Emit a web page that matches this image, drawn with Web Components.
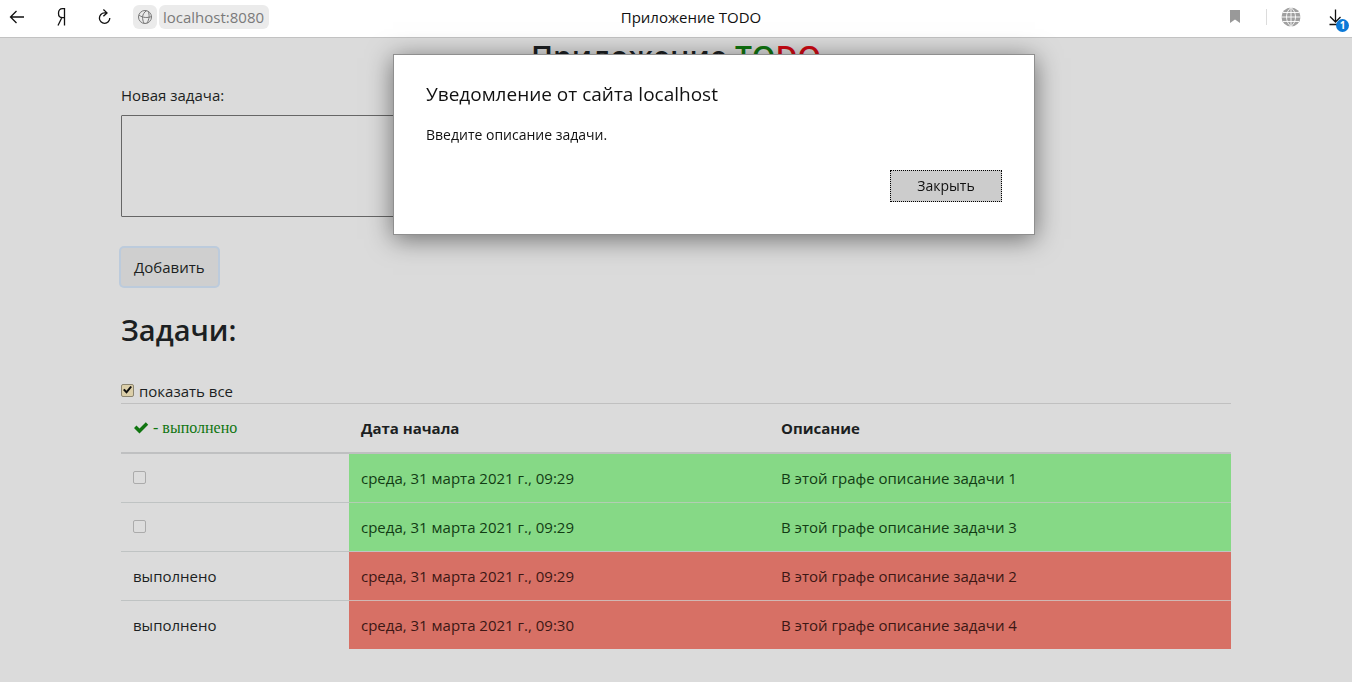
<!DOCTYPE html>
<html lang="ru">
<head>
<meta charset="utf-8">
<title>Приложение TODO</title>
<style>
  html, body { margin: 0; min-height: 100%; }
  body {
    background: #dbdbdb;
    color: #1c1f22;
    font: 15px/24px "Open Sans", "Noto Sans", sans-serif;
  }
</style>
</head>
<body>
<browser-bar address="localhost:8080">Приложение TODO</browser-bar>
<todo-app></todo-app>
<site-alert heading="Уведомление от сайта localhost">Введите описание задачи.</site-alert>

<script>
class BaseElement extends HTMLElement {
  render(html) {
    const template = document.createElement('template');
    template.innerHTML = html;
    this.attachShadow({ mode: 'open' }).append(template.content.cloneNode(true));
  }
}

class BrowserBar extends BaseElement {
  connectedCallback() {
    this.render(`
      <style>
        :host {
          display: grid; grid-template-columns: 1fr auto 1fr; align-items: center;
          box-sizing: border-box; height: 38px; padding-bottom: 3px; background: #fff; color: #111;
          border-bottom: 1px solid #c2c2c2; font-size: 15px; line-height: 24px;
        }
        nav, .tools { display: flex; align-items: center; }
        .tools { justify-content: flex-end; }
        button { border: 0; padding: 0; background: none; font: inherit; color: inherit; display: flex; }
        svg { display: block; fill: none; stroke: currentColor; }
        .back { margin-left: 8px; }
        .home { margin-left: 31px; }
        .reload { margin-left: 30px; }
        .site { margin-left: 20px; }
        .site, .url { background: #ebebeb; border-radius: 6px; height: 24px; }
        .site { width: 24px; align-items: center; justify-content: center; color: #777; }
        .url { margin-left: 2px; padding: 0 5px 0 4px; color: #7a7a7a; }
        h1 { margin: 0; padding-left: 30px; font: inherit; }
        .mark { color: #999; }
        .rule { width: 1px; height: 16px; background: #dcdcdc; margin: 0 14px 0 26px; }
        .web { color: #a0a0a0; }
        .load { position: relative; margin-left: 27px; width: 24px; height: 24px; color: #111; }
        .badge {
          position: absolute; right: 3px; bottom: -3px; width: 13px; height: 13px; border-radius: 50%;
          background: #0b79d8; color: #fff; font-size: 10px; line-height: 13px; font-weight: 700; text-align: center;
        }
      </style>
      <nav aria-label="Навигация">
        <button class="back" aria-label="Назад"><svg width="18" height="16" viewBox="0 0 18 16"><path d="M16 8H2.500M8.500 2L2.500 8l6 6" stroke-width="1.300"/></svg></button>
        <button class="home" aria-label="Яндекс"><svg width="10" height="20" viewBox="0 0 10 20"><path d="M7.500 18.500V1.700H5.500C3 1.700 1.500 3.500 1.500 6.200S3 10.700 5.500 10.700h2M4.800 10.700L1 18.500" stroke-width="1.300"/></svg></button>
        <button class="reload" aria-label="Обновить"><svg width="16" height="18" viewBox="0 0 16 18"><path d="M9.500 4.900H7.500a5.200 5.200 0 1 0 5.300 5.200M6.400 1.500L10 4.900 6.400 8.300" stroke-width="1.300"/></svg></button>
        <button class="site" aria-label="О сайте"><svg width="16" height="16" viewBox="0 0 16 16"><circle cx="8" cy="8" r="6.500"/><path d="M9.500 1.700C4.500 5 5 10 7 14.300M2 6c3.500 3 9 3 12.500 1.500M11 2.300c1.800 3.200 1.300 8-1 11.800"/></svg></button>
        <span class="url"></span>
      </nav>
      <h1><slot></slot></h1>
      <div class="tools">
        <button class="mark" aria-label="Закладка"><svg width="10" height="14" viewBox="0 0 10 14"><path d="M0 0h10v13L5 9.500 0 13z" fill="currentColor" stroke="none"/></svg></button>
        <span class="rule"></span>
        <button class="web" aria-label="Перевод"><svg width="20" height="20" viewBox="0 0 20 20"><circle cx="10" cy="10" r="9.500" fill="currentColor" stroke="none"/><path stroke="#fff" stroke-width=".9" d="M10 0v20M0 10h20M2 5.500h16M2 14.500h16M10 .500C4 5 4 15 10 19.500M10 .500C16 5 16 15 10 19.500"/></svg></button>
        <button class="load" aria-label="Загрузки"><svg width="20" height="24" viewBox="0 0 20 24"><path d="M7.500 4.500v12.500M2 11.500L7.500 17l5-5M1.500 19.500h8" stroke-width="1.300"/></svg><span class="badge">1</span></button>
      </div>`);
    this.shadowRoot.querySelector('.url').textContent = this.getAttribute('address');
  }
}
customElements.define('browser-bar', BrowserBar);

class CheckBox extends BaseElement {
  connectedCallback() {
    this.render(`
      <style>
        :host { display: block; }
        label { display: flex; align-items: center; gap: 5px; height: 24px; }
        input {
          appearance: none; box-sizing: border-box; width: 13px; height: 13px; margin: 0 0 2px;
          border: 1px solid #ababab; border-radius: 2px; background: #dddddd; display: grid; place-items: center;
        }
        input:checked { background: #dccfa9; border-color: #8c8570; }
        input:checked::before {
          content: ""; width: 9px; height: 9px; background: #111;
          clip-path: polygon(0 50%, 18% 35%, 38% 58%, 82% 5%, 100% 18%, 40% 92%);
        }
      </style>
      <label><input type="checkbox"><slot></slot></label>`);
    const input = this.shadowRoot.querySelector('input');
    input.checked = this.hasAttribute('checked');
    if (this.hasAttribute('label')) input.setAttribute('aria-label', this.getAttribute('label'));
  }
}
customElements.define('check-box', CheckBox);

class TaskForm extends BaseElement {
  connectedCallback() {
    this.render(`
      <style>
        :host { display: block; }
        form { display: flex; flex-direction: column; align-items: flex-start; }
        label { margin-bottom: 8px; }
        textarea {
          box-sizing: border-box; width: 50%; height: 102px; margin: 0 0 31px; padding: 4px; resize: none;
          border: 1px solid #666; border-radius: 1px; background: #dbdbdb; font: inherit; color: inherit;
        }
        button {
          height: 38px; padding: 0 13px; border: 0; border-radius: 3px;
          background: #cfcfcf; box-shadow: 0 0 0 2px #bccbdc; color: #1c1f22; font: inherit;
        }
      </style>
      <form>
        <label for="task">Новая задача:</label>
        <textarea id="task"></textarea>
        <button type="button">Добавить</button>
      </form>`);
  }
}
customElements.define('task-form', TaskForm);

const TASKS = [
  { done: false, date: 'среда, 31 марта 2021 г., 09:29', text: 'В этой графе описание задачи 1' },
  { done: false, date: 'среда, 31 марта 2021 г., 09:29', text: 'В этой графе описание задачи 3' },
  { done: true, date: 'среда, 31 марта 2021 г., 09:29', text: 'В этой графе описание задачи 2' },
  { done: true, date: 'среда, 31 марта 2021 г., 09:30', text: 'В этой графе описание задачи 4' },
];

class TaskTable extends BaseElement {
  connectedCallback() {
    const rows = TASKS.map(t => `
      <tr class="${t.done ? 'done' : 'open'}">
        <td>${t.done ? 'выполнено' : '<check-box label="Отметить выполненной"></check-box>'}</td>
        <td>${t.date}</td>
        <td>${t.text}</td>
      </tr>`).join('');
    this.render(`
      <style>
        :host { display: block; }
        table { width: 100%; border-spacing: 0; table-layout: fixed; }
        th, td { padding: 12px; height: 24px; text-align: left; vertical-align: top; }
        th { border-top: 1px solid #c0c0c0; border-bottom: 2px solid #bfc0c1; }
        th:nth-child(1) { width: 204px; }
        th:nth-child(2) { width: 396px; }
        tr + tr td { border-top: 1px solid #bfc3c3; }
        .open td + td { background: #86d986; color: #123c14; }
        .done td + td { background: #d77065; color: #3c1714; }
        tr + .open td + td { border-top-color: #b3cdb3; }
        .done + .done td + td { border-top-color: #d0b8b4; }
        .legend { display: flex; align-items: center; gap: 4px; color: #107510; font: 16px/24px "Liberation Serif", serif; }
      </style>
      <table>
        <thead><tr>
          <th><span class="legend"><svg width="16" height="14" viewBox="0 0 16 14" aria-hidden="true"><path fill="#107510" d="M1 7l2.500-2.500L6.500 7.500 12.800 1.200 15.200 3.700 6.500 12.500z"/></svg>- выполнено</span></th>
          <th>Дата начала</th><th>Описание</th>
        </tr></thead>
        <tbody>${rows}</tbody>
      </table>`);
  }
}
customElements.define('task-table', TaskTable);

class TodoApp extends BaseElement {
  connectedCallback() {
    this.render(`
      <style>
        :host { display: block; }
        main { box-sizing: border-box; max-width: 1140px; margin: 0 auto; padding: 0 15px 32px; }
        h2 { margin: 0 0 7px; font-size: 30px; line-height: 38px; font-weight: 600; }
        .title { text-align: center; }
        .to { color: #107510; }
        .do { color: #cf0a14; }
        .list { margin: 25px 0 30px; font-size: 29px; }
      </style>
      <main>
        <h2 class="title">Приложение <span class="to">TO</span><span class="do">DO</span></h2>
        <task-form></task-form>
        <h2 class="list">Задачи:</h2>
        <check-box checked>показать все</check-box>
        <task-table></task-table>
      </main>`);
  }
}
customElements.define('todo-app', TodoApp);

class SiteAlert extends BaseElement {
  connectedCallback() {
    this.render(`
      <style>
        :host {
          position: fixed; inset: 54px 0 auto; display: flex; justify-content: center; padding-left: 76px;
          pointer-events: none;
        }
        dialog {
          position: static; box-sizing: border-box; width: 642px; margin: 0; padding: 23px 32px 32px;
          border: 1px solid #8f8f8f; background: #fff; color: #111;
          box-shadow: 0 4px 24px rgba(0, 0, 0, .5); font-size: 14px; line-height: 20px; pointer-events: auto;
        }
        h2 { margin: 0 0 15px; font-size: 19px; line-height: 32px; font-weight: 400; }
        p { margin: 0 0 25px; }
        form { display: flex; justify-content: flex-end; }
        button {
          width: 112px; height: 32px; padding: 0; border: 1px dotted #000; background: #ccc;
          color: #111; font: inherit;
        }
      </style>
      <dialog open aria-labelledby="heading">
        <h2 id="heading"></h2>
        <p><slot></slot></p>
        <form method="dialog"><button>Закрыть</button></form>
      </dialog>`);
    this.shadowRoot.querySelector('h2').textContent = this.getAttribute('heading');
  }
}
customElements.define('site-alert', SiteAlert);
</script>
</body>
</html>
